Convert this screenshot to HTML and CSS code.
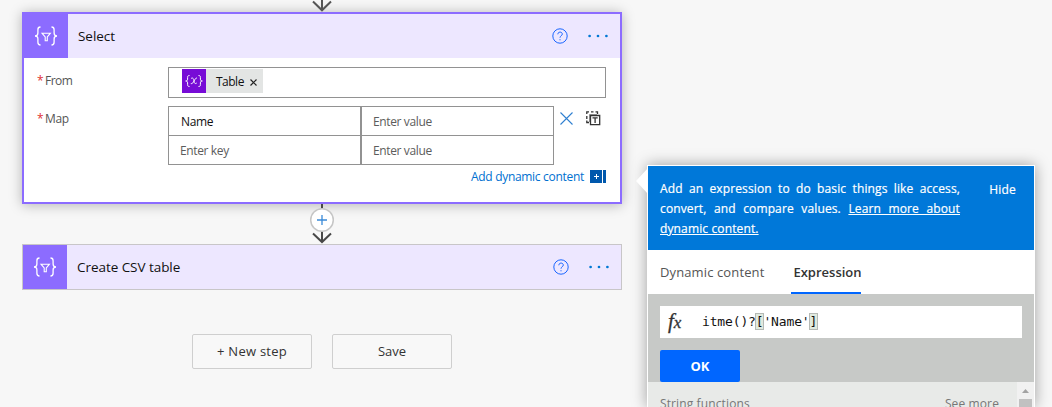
FILE: index.html
```html
<!DOCTYPE html>
<html lang="en">
<head>
<meta charset="utf-8">
<title>Flow designer</title>
<link rel="stylesheet" href="styles.css">
</head>
<body>
<svg class="defs" width="0" height="0">
  <symbol id="filter-braces" viewBox="0 0 24 20">
    <g fill="none" stroke="#fff" stroke-width="1.3">
      <path d="M6.500 1C4.200 1 3.900 2 3.900 3.800V7C3.900 9 3 10 1 10C3 10 3.900 11 3.900 13V16.200C3.900 18 4.200 19 6.500 19"/>
      <path d="M17.500 1C19.800 1 20.100 2 20.100 3.800V7C20.100 9 21 10 23 10C21 10 20.100 11 20.100 13V16.200C20.100 18 19.800 19 17.500 19"/>
      <path d="M8 7.200H16.400L13.300 11V14.800H11.200V11Z" stroke-width="1.100"/>
    </g>
  </symbol>
  <symbol id="help" viewBox="0 0 16 16">
    <circle cx="8" cy="8" r="7.200" fill="none" stroke="#1a66ff"/>
    <path d="M5.800 6.300C5.800 3.300 10.300 3.400 10.300 6.100C10.300 7.700 8 7.800 8 9.700M8 11.200V12.300" fill="none" stroke="#1a66ff"/>
  </symbol>
  <symbol id="more" viewBox="0 0 20 4">
    <g fill="#0078d4"><circle cx="1.600" cy="2" r="1.350"/><circle cx="10" cy="2" r="1.350"/><circle cx="18.400" cy="2" r="1.350"/></g>
  </symbol>
</svg>

<main class="canvas">
  <svg class="arrow-top" width="22" height="12" viewBox="0 0 22 12"><path d="M11 0V10M2 1.500L11 10.300L20 1.500" fill="none" stroke="#555" stroke-width="2"/></svg>

  <section class="card selected">
    <header class="card-head">
      <div class="card-icon"><svg width="24" height="20"><use href="#filter-braces"/></svg></div>
      <h2 class="card-title">Select</h2>
      <svg class="help" width="16" height="16"><use href="#help"/></svg>
      <svg class="more" width="20" height="4"><use href="#more"/></svg>
    </header>
    <div class="card-body">
      <div class="field">
        <label class="label from"><b class="req">*</b><span>From</span></label>
        <div class="input">
          <div class="token">
            <svg width="24" height="24" viewBox="0 0 24 24"><rect width="24" height="24" fill="#770bd6"/><g fill="none" stroke="#fff"><path d="M7.500 6.500C5.800 6.500 5.600 7.200 5.600 8.500V10C5.600 11.200 5.200 12 3.700 12C5.200 12 5.600 12.800 5.600 14V15.500C5.600 16.900 5.800 17.500 7.500 17.500M16.500 6.500C18.200 6.500 18.400 7.200 18.400 8.500V10C18.400 11.200 18.800 12 20.300 12C18.800 12 18.400 12.800 18.400 14V15.500C18.400 16.900 18.200 17.500 16.500 17.500"/><path d="M9 9.500C11 8.300 11.600 9.700 12 12C12.400 14.300 13 15.300 14.800 14M15 9C13.500 8.700 13 10.500 12 12C11 13.700 10.500 15 8.800 14.600" stroke-width=".9"/></g></svg>
            <span class="token-text">Table</span>
            <svg class="token-x" width="7" height="7" viewBox="0 0 7 7"><path d="M.5.5L6.500 6.500M6.500.5L.5 6.500" stroke="#222" stroke-width="1.200"/></svg>
          </div>
        </div>
      </div>
      <div class="field map">
        <label class="label"><b class="req">*</b><span>Map</span></label>
        <div class="grid">
          <div class="cell filled">Name</div><div class="cell">Enter value</div>
          <div class="cell">Enter key</div><div class="cell">Enter value</div>
        </div>
        <svg class="remove" width="13" height="13" viewBox="0 0 13 13"><path d="M.5.5L12.500 12.500M12.500.5L.5 12.500" stroke="#2f7fd0" stroke-width="1.100"/></svg>
        <svg class="textmode" width="15" height="15" viewBox="0 0 15 15" fill="none" stroke="#333"><path d="M.8 3V.8H3M5 .8H7.500M9.500 .8H11.500V3M.8 5V8M.8 9.500V11.500H3" stroke-width="1.300"/><path d="M4.500 4.500H13.700V13.700H4.500Z" stroke-width="1.300"/><path d="M3.500 11V3.500H11" stroke="#888"/><path d="M6.500 6.800H11.700M9.100 6.800V12" stroke-width="1.300"/></svg>
      </div>
      <div class="dynamic"><span>Add dynamic content</span>
        <svg width="16" height="13" viewBox="0 0 16 13"><path d="M0 0H12V13H0ZM13 0H16V13H13Z" fill="#0058ad"/><path d="M4 6.500H9M6.500 4V9" stroke="#fff"/></svg>
      </div>
    </div>
  </section>

  <div class="connector">
    <svg width="26" height="40" viewBox="0 0 26 40"><path d="M13 0V38M4 29.500L13 38L22 29.500" fill="none" stroke="#484848" stroke-width="2"/><circle cx="13" cy="16" r="11.300" fill="#fff" stroke="#c6c6c6" stroke-width="1.500"/><path d="M8 16H18M13 11V21" stroke="#3b8ad8" stroke-width="1.300"/></svg>
  </div>

  <section class="card">
    <header class="card-head">
      <div class="card-icon"><svg width="24" height="20"><use href="#filter-braces"/></svg></div>
      <h2 class="card-title">Create CSV table</h2>
      <svg class="help" width="16" height="16"><use href="#help"/></svg>
      <svg class="more" width="20" height="4"><use href="#more"/></svg>
    </header>
  </section>

  <div class="actions">
    <button class="btn new">+ New step</button>
    <button class="btn">Save</button>
  </div>
</main>

<aside class="panel">
  <svg class="beak" width="12" height="26" viewBox="0 0 12 26"><path d="M12 0V26L0 13Z" fill="#fff"/></svg>
  <div class="banner">
    <p class="banner-text">Add an expression to do basic things like access, convert, and compare values. <u>Learn more about dynamic content.</u></p>
    <span class="hide">Hide</span>
  </div>
  <nav class="tabs"><span class="tab">Dynamic content</span><span class="tab active">Expression</span></nav>
  <div class="editor">
    <div class="formula"><span class="fx">f<small>x</small></span><code class="code">itme()?<mark>[</mark>'Name'<mark>]</mark></code></div>
    <button class="ok">OK</button>
  </div>
  <div class="functions">
    <div class="group"><span>String functions</span><span>See more</span></div>
    <div class="scrollbar"><svg width="17" height="17" viewBox="0 0 17 17"><path d="M5 11H12L8.500 7Z" fill="#a3a3a3"/></svg><div class="thumb"></div></div>
  </div>
</aside>
</body>
</html>
```

FILE: styles.css
```css
* { box-sizing: border-box; }
body {
  margin: 0;
  height: 407px;
  overflow: hidden;
  position: relative;
  background: #f7f7f7;
  font-family: "Open Sans", "Noto Sans", sans-serif;
  font-size: 12px;
  color: #333;
}
svg { display: block; flex: none; }
span, label, h2 { white-space: nowrap; }
.defs { position: absolute; }
.canvas { width: 622px; padding-left: 22px; }
.arrow-top { margin-left: 289px; }

.card { width: 600px; border: 1px solid #c8c6c8; background: #fff; }
.card.selected { height: 192px; border: 2px solid #8c6cff; box-shadow: 0 1px 12px rgba(0, 0, 0, .28); }
.card-head { display: flex; align-items: center; height: 44px; background: #ede7ff; padding-right: 12px; }
.card-icon { width: 44px; height: 44px; background: #8c6cff; display: flex; align-items: center; justify-content: center; }
.card-title { flex: 1; margin: 0 0 0 10px; font-size: 13.5px; font-weight: 400; letter-spacing: -.05px; color: #111; }
.help { margin-right: 20.5px; }

.card-body { padding: 9px 14px 0 13px; letter-spacing: -.37px; }
.field { display: flex; }
.label { width: 131px; display: flex; gap: 3px; color: #555; line-height: 17px; padding-top: 4px; }
.from { padding-top: 5px; letter-spacing: -.5px; }
.req { color: #e03030; font-weight: 400; width: 5px; }
.input { width: 438px; height: 31px; border: 1px solid #929292; padding: 1px 0 0 13px; }
.token { width: 81px; height: 24px; background: #e3e5e4; display: flex; align-items: center; color: #111; }
.token-text { width: 28px; margin: 0 6px 0 10px; letter-spacing: -.5px; }
.token-x { margin-top: 2px; }
.map { margin-top: 8px; }
.grid { display: grid; grid-template-columns: 192px 192px; grid-template-rows: 29px 28px; border: 1px solid #929292; width: 386px; height: 59px; }
.cell { border-right: 1px solid #929292; border-bottom: 1px solid #929292; display: flex; align-items: center; padding-left: 11px; color: #5c5c5c; }
.cell:nth-child(even) { border-right: 0; border-left: 1px solid #929292; }
.cell:nth-child(n+3) { border-bottom: 0; }
.cell.filled { color: #111; padding-left: 12px; }
.remove { margin: 6px 0 0 6px; }
.textmode { margin: 5px 0 0 13px; }
.dynamic { display: flex; justify-content: flex-end; align-items: center; gap: 6px; color: #0070d0; height: 17px; margin-top: 3px; letter-spacing: -.3px; }

.connector { height: 40px; display: flex; justify-content: center; position: relative; }
.actions { display: flex; gap: 20px; margin: 44px 0 0 170px; }
.btn { width: 120px; height: 35px; border: 1px solid #cfcfcf; border-radius: 2px; background: #f8f8f8; font: 13px "Open Sans", sans-serif; color: #333; padding: 0 0 2px; }
.btn.new { letter-spacing: .25px; }

.panel { position: absolute; left: 647px; top: 165px; width: 388px; height: 242px; border: 1px solid #fff; border-bottom: 0; background: #fff; box-shadow: 0 0 14px rgba(0, 0, 0, .36); }
.beak { position: absolute; left: -12px; top: 2px; }
.banner { height: 84px; background: #0078d9; color: #fff; padding: 13px 18px 0 12px; display: flex; justify-content: space-between; }
.banner-text { width: 300px; margin: 0; line-height: 20px; text-align: justify; letter-spacing: .13px; -webkit-text-stroke: .2px #fff; }
.hide { line-height: 21px; letter-spacing: .2px; -webkit-text-stroke: .2px #fff; }
.tabs { height: 44px; display: flex; padding-left: 12px; gap: 27px; line-height: 44px; font-size: 13px; color: #555; }
.tab { letter-spacing: .12px; }
.tab.active { font-weight: 600; letter-spacing: 0; color: #333; border-bottom: 2px solid #06f; width: 70px; padding-left: 2px; }
.editor { height: 88px; background: #c7c9c7; padding: 12px; }
.formula { height: 32px; background: #fff; display: flex; align-items: center; margin-bottom: 12px; }
.fx { font: italic 400 21px/32px "Liberation Serif", serif; color: #333; width: 42px; padding-left: 8px; -webkit-text-stroke: .3px #333; }
.fx small { font-size: 17px; }
.code { font: 13px "DejaVu Sans Mono", monospace; letter-spacing: -.15px; color: #111; padding-bottom: 2px; }
.code mark { background: #e0eadf; outline: 1px solid #b5b9b5; color: #111; }
.ok { display: block; width: 80px; height: 32px; border: 0; border-radius: 2px; background: #06f; color: #fff; font: 700 13px "Open Sans", sans-serif; }
.functions { display: flex; height: 25px; background: #e8eae8; color: #777; letter-spacing: .12px; overflow: hidden; }
.group { flex: 1; display: flex; justify-content: space-between; padding: 13px 18px 0 12px; line-height: 17px; }
.scrollbar { width: 17px; background: #f1f1f1; }
.thumb { width: 13px; height: 8px; margin-left: 2px; background: #c1c1c1; }
```
